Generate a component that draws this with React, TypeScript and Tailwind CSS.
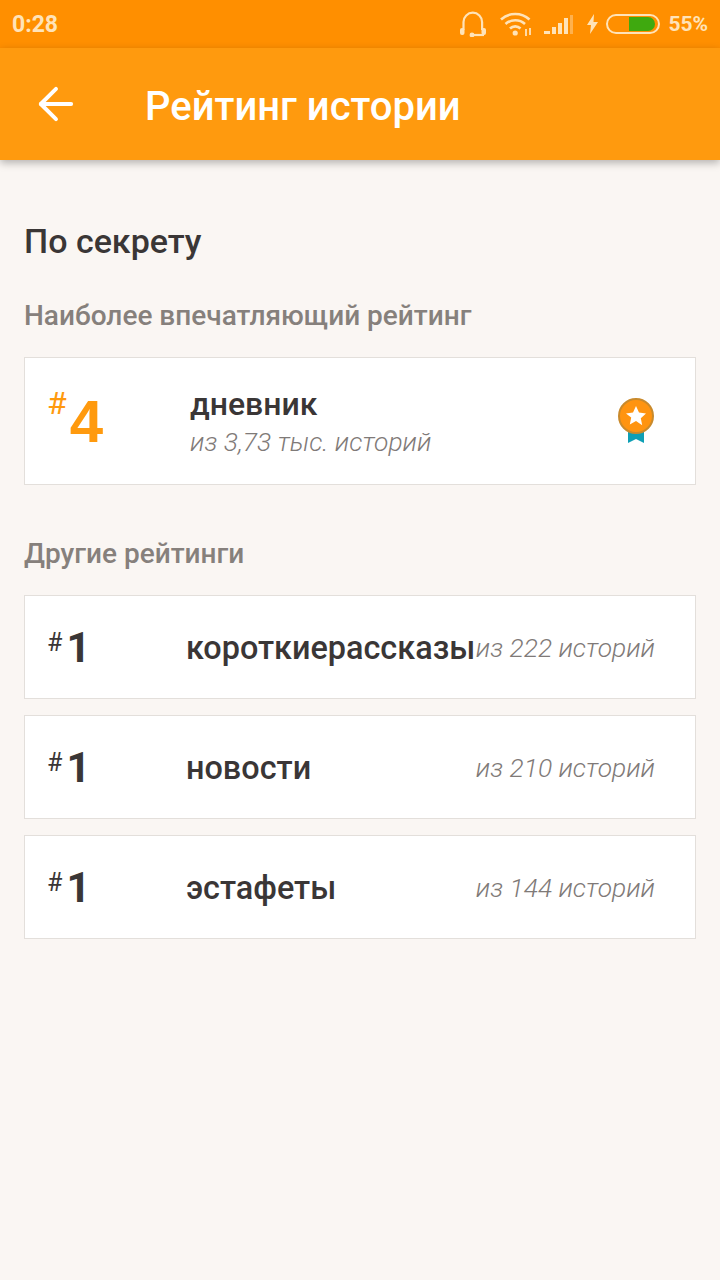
import { ArrowLeft } from 'lucide-react'

type Ranking = {
  tag: string
  total: string
}

const otherRankings: Ranking[] = [
  { tag: 'короткиерассказы', total: 'из 222 историй' },
  { tag: 'новости', total: 'из 210 историй' },
  { tag: 'эстафеты', total: 'из 144 историй' },
]

function StatusIcons() {
  return (
    <div className="flex items-center">
      <svg width="28" height="26" viewBox="0 0 28 26" fill="none" stroke="#ffe3b8" strokeWidth="2.2" className="mr-[13px]">
        <path d="M4.500 19V11a9.300 9.300 0 0 1 18.600 0v8" />
        <rect x="1" y="17" width="4.500" height="7" rx="2" fill="#ffe3b8" stroke="none" />
        <rect x="22.500" y="17" width="4.500" height="7" rx="2" fill="#ffe3b8" stroke="none" />
        <path d="M13 24h12" />
        <circle cx="13" cy="24" r="2.400" fill="#ffe3b8" stroke="none" />
      </svg>
      <svg width="33" height="26" viewBox="0 0 33 26" fill="none" stroke="#ffe3b8" strokeWidth="2.600" className="mr-[11px]">
        <path d="M1 8.500a21 21 0 0 1 28.500 0" />
        <path d="M5.500 13a14.500 14.500 0 0 1 19.500 0" />
        <path d="M10 17.500a7.500 7.500 0 0 1 10.500 0" />
        <circle cx="15.200" cy="22" r="2.600" fill="#ffe3b8" stroke="none" />
        <path d="M26 18v7M30 17v7" strokeWidth="1.800" />
      </svg>
      <svg width="30" height="24" viewBox="0 0 30 24" className="mr-[13px]">
        <rect x="0" y="19" width="6" height="3" fill="#ffe3b8" />
        <rect x="8" y="15" width="4" height="7" fill="#ffe3b8" />
        <rect x="14" y="11" width="4" height="11" fill="#ffe3b8" />
        <rect x="20" y="6" width="4" height="16" fill="#ffe3b8" />
        <rect x="26" y="3" width="3" height="19" fill="#ffb14d" />
      </svg>
      <svg width="11" height="20" viewBox="0 0 11 20" className="mr-[8px]">
        <path d="M7 0 0 11h4l-1 9 8-12H6.500z" fill="#ffe3b8" />
      </svg>
      <div className="mr-[8px] flex h-[20px] w-[54px] items-center justify-end rounded-full border-2 border-[#ffe3b8] pr-[3px]">
        <div className="h-[14px] w-[26px] rounded-r-full bg-[#3fa90f]" />
      </div>
      <span className="text-[21px] leading-6 font-bold text-[#ffe3b8]">55%</span>
    </div>
  )
}

function Medal() {
  return (
    <svg width="36" height="46" viewBox="0 0 36 46">
      <path d="M10 28h16v17l-8-4-8 4z" fill="#0e9fb5" />
      <circle cx="18" cy="18" r="17" fill="#ff9410" stroke="#c98a2c" strokeWidth="2" />
      <path d="m18 8 3 6.600 7 .8-5.200 4.800 1.400 7L18 23l-6.200 3.600 1.400-7L8 15.400l7-.8z" fill="#fff" />
    </svg>
  )
}

function RankingRow({ tag, total }: Ranking) {
  return (
    <div className="flex h-[104px] items-center border border-[#e3dfdb] bg-white pr-10 pl-6">
      <div className="flex w-[137px] shrink-0 items-start text-[#3a3636]">
        <span className="mt-[5px] mr-[4px] ml-[-2px] text-[25px] leading-8">#</span>
        <span className="mt-[2px] text-[42px] leading-[48px] font-bold">1</span>
      </div>
      <span className="mt-[2px] shrink-0 text-[32.4px] leading-10 font-medium text-[#3a3636]">{tag}</span>
      <span className="mt-[2px] ml-auto shrink-0 text-[26.4px] leading-8 font-light text-[#7f7a78] italic">{total}</span>
    </div>
  )
}

export default function App() {
  return (
    <div className="flex min-h-[1280px] flex-col bg-[#faf6f3] font-['Roboto',sans-serif]">
      <div className="flex h-12 items-center justify-between bg-[#ff8f00] pr-3 pl-3">
        <span className="mt-[2px] text-[23px] leading-6 font-bold text-[#ffe3b8]">0:28</span>
        <StatusIcons />
      </div>
      <header className="flex h-28 items-center bg-[#ff9a0e] pl-10 shadow-[0_3px_8px_rgba(0,0,0,0.28)]">
        <ArrowLeft size={52} strokeWidth={1.8} className="ml-[-10px] text-white" />
        <h1 className="mt-[6px] ml-[63px] text-[40px] leading-[44px] font-medium text-white">Рейтинг истории</h1>
      </header>
      <main className="flex flex-col px-6 pt-[61px]">
        <h2 className="text-[34px] leading-10 font-medium text-[#3a3636]">По секрету</h2>
        <h3 className="mt-[39px] text-[28px] leading-8 font-medium text-[#86807c]">Наиболее впечатляющий рейтинг</h3>
        <div className="mt-[25px] flex h-[128px] items-center border border-[#e3dfdb] bg-white pr-10 pl-6">
          <div className="flex w-[141px] shrink-0 items-start text-[#ff9a0e]">
            <span className="mt-[-2px] mr-[3px] ml-[-2px] text-[32px] leading-8">#</span>
            <span className="mt-[1px] font-['Liberation_Sans',sans-serif] text-[60px] leading-[64px] font-bold">4</span>
          </div>
          <div className="flex flex-col">
            <span className="text-[32px] leading-10 font-medium text-[#3a3636]">дневник</span>
            <span className="mt-[2px] text-[26.4px] leading-8 font-light text-[#7f7a78] italic">из 3,73 тыс. историй</span>
          </div>
          <div className="mr-[1px] ml-auto flex">
            <Medal />
          </div>
        </div>
        <h3 className="mt-[53px] text-[28px] leading-8 font-medium text-[#86807c]">Другие рейтинги</h3>
        <div className="mt-[25px] flex flex-col gap-4">
          {otherRankings.map((ranking) => (
            <RankingRow key={ranking.tag} {...ranking} />
          ))}
        </div>
      </main>
    </div>
  )
}
